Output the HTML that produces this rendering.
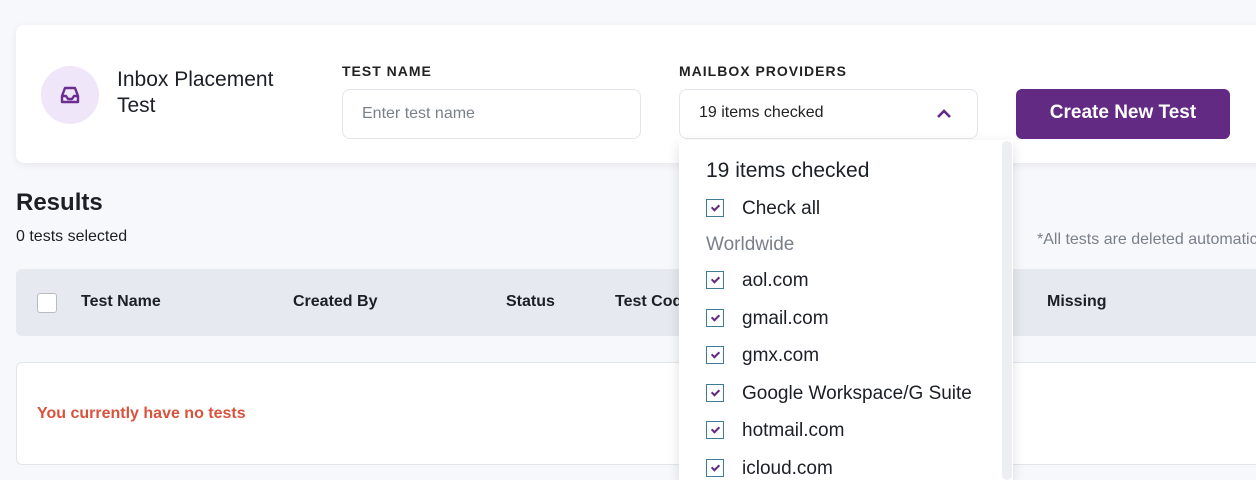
<!DOCTYPE html>
<html><head><style>
*{box-sizing:border-box;margin:0;padding:0}
html,body{width:1256px;height:480px;overflow:hidden}
body{background:#f7f8fb;font-family:"Liberation Sans",sans-serif;color:#1c1f26;position:relative}
.card{position:absolute;left:16px;top:25px;width:1260px;height:138px;background:#fff;border-radius:8px;box-shadow:0 2px 8px rgba(0,0,0,.07)}
.ic{position:absolute;left:41px;top:66px;width:58px;height:58px;border-radius:50%;background:#efe6fa}
.title{position:absolute;left:117px;top:67px;font-size:21px;line-height:26px}
.lbl{position:absolute;font-size:14px;font-weight:bold;letter-spacing:1px;color:#222}
.inp{position:absolute;top:89px;height:50px;border:1px solid #e3e5ea;border-radius:8px;background:#fff;font-size:16px;padding:15px 19px}
.btn{position:absolute;left:1016px;top:89px;width:214px;height:50px;background:#622a82;border-radius:6px;color:#fff;font-weight:bold;font-size:19px;text-align:center;line-height:48px}
.dd{position:absolute;left:679px;top:140px;width:334px;height:340px;background:#fff;box-shadow:0 4px 12px rgba(0,0,0,.12)}
.sb{position:absolute;left:1002px;top:141px;width:10px;height:339px;background:#eceef1;border-radius:5px}
.row{position:absolute;left:706px;font-size:19px;line-height:22px}
.cb{display:inline-block;width:18px;height:18px;border:1.5px solid #3b7d97;vertical-align:-3px;margin-right:18px;position:relative}
.cb:after{content:"";position:absolute;left:5.5px;top:3px;width:3px;height:6px;border:solid #622a82;border-width:0 2px 2px 0;transform:rotate(45deg)}
.th{position:absolute;top:293px;font-size:16px;font-weight:bold}
</style></head><body>
<div class="card"></div>
<div class="ic"><svg width="58" height="58" viewBox="0 0 58 58"><g fill="none" stroke="#6b2d8e" stroke-width="2.4" stroke-linejoin="round"><path d="M21 30 L24 22 H34 L37 30 V36 H21 Z"/><path d="M21 30 H25 L27 33 H31 L33 30 H37"/></g></svg></div>
<div class="title">Inbox Placement<br>Test</div>
<div class="lbl" style="left:342px;top:63px">TEST NAME</div>
<div class="inp" style="left:342px;width:299px;color:#7a808a">Enter test name</div>
<div class="lbl" style="left:679px;top:63px">MAILBOX PROVIDERS</div>
<div class="inp" style="left:679px;width:299px;color:#222;padding-top:14px">19 items checked
<svg style="position:absolute;left:256px;top:19px" width="16" height="10" viewBox="0 0 16 10"><path d="M2 8 L8 2 L14 8" fill="none" stroke="#622a82" stroke-width="2.6"/></svg></div>
<div class="btn">Create New Test</div>
<div style="position:absolute;left:16px;top:189px;font-size:24px;font-weight:bold">Results</div>
<div style="position:absolute;left:16px;top:228px;font-size:16px">0 tests selected</div>
<div style="position:absolute;left:1037px;top:231px;font-size:16px;color:#7a808a;white-space:nowrap">*All tests are deleted automatically</div>
<div style="position:absolute;left:16px;top:269px;width:1260px;height:67px;background:#e6e9ef;border-radius:6px"></div>
<div style="position:absolute;left:37px;top:293px;width:20px;height:20px;border:1.5px solid #b8bcc5;border-radius:3px;background:#fff"></div>
<div class="th" style="left:81px">Test Name</div>
<div class="th" style="left:293px">Created By</div>
<div class="th" style="left:506px">Status</div>
<div class="th" style="left:615px">Test Code</div>
<div class="th" style="left:1047px">Missing</div>
<div style="position:absolute;left:16px;top:362px;width:1260px;height:103px;background:#fff;border:1px solid #e3e5ea;border-radius:6px"></div>
<div style="position:absolute;left:37px;top:405px;font-size:16px;font-weight:bold;color:#d9533c">You currently have no tests</div>
<div class="dd"></div><div class="sb"></div>
<div class="row" style="top:160px;font-size:21px">19 items checked</div>
<div class="row" style="top:198px"><span class="cb"></span>Check all</div>
<div class="row" style="top:234px;color:#7a808a">Worldwide</div>
<div class="row" style="top:270px"><span class="cb"></span>aol.com</div>
<div class="row" style="top:308px"><span class="cb"></span>gmail.com</div>
<div class="row" style="top:345px"><span class="cb"></span>gmx.com</div>
<div class="row" style="top:383px"><span class="cb"></span>Google Workspace/G Suite</div>
<div class="row" style="top:420px"><span class="cb"></span>hotmail.com</div>
<div class="row" style="top:458px"><span class="cb"></span>icloud.com</div>
</body></html>
